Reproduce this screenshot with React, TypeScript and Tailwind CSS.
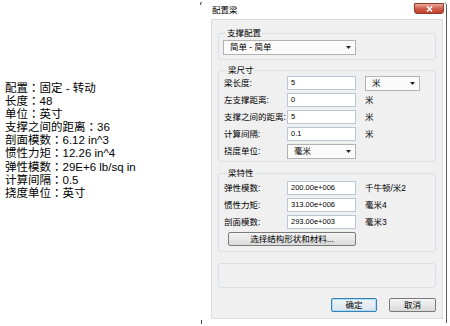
import React from "react";

const Colon = () => <span className="font-['Noto_Sans_CJK_TC',sans-serif]">：</span>;

const lines: [string, string][] = [
  ["配置", "固定 - 转动"],
  ["长度", "48"],
  ["单位", "英寸"],
  ["支撑之间的距离", "36"],
  ["剖面模数", "6.12 in^3"],
  ["惯性力矩", "12.26 in^4"],
  ["弹性模数", "29E+6 lb/sq in"],
  ["计算间隔", "0.5"],
  ["挠度单位", "英寸"],
];

const Arrow = () => (
  <svg width="5" height="3" viewBox="0 0 5 3" className="shrink-0">
    <path d="M0 0H5L2.5 3Z" fill="#222" />
  </svg>
);

const Select = ({ value, w }: { value: string; w: string }) => (
  <div className={`${w} h-[15px] flex items-center justify-between pl-[6px] pr-[4px] bg-[#fbfbfb] border border-[#b3b3b3] text-[8.5px]`}>
    <span>{value}</span>
    <Arrow />
  </div>
);

const Input = ({ value }: { value: string }) => (
  <div className="w-[69px] h-[14px] flex items-center px-[3px] bg-white border border-[#b7c7d6] text-[7.5px]">
    {value}
  </div>
);

const Row = ({ label, children }: { label: string; children: React.ReactNode }) => (
  <div className="h-[14px] flex items-center">
    <div className="w-[63px] text-[8.5px] whitespace-nowrap">{label}</div>
    {children}
  </div>
);

const Unit = ({ t }: { t: string }) => <div className="ml-[9px] text-[8.5px] whitespace-nowrap">{t}</div>;

const Legend = ({ t }: { t: string }) => (
  <legend className="ml-[3px] px-[1px] text-[8.5px] leading-[12px]">{t}</legend>
);

function Dialog() {
  return (
    <div className="relative w-[248px] h-[326px] shrink-0">
      <div className="absolute left-0 top-[2px] w-[2px] h-[3px] border-l border-t border-[#555] rounded-tl-[2px]" />
      <div className="absolute left-[1px] top-[320px] w-[1px] h-[4px] bg-[#444]" />
      <div className="mt-[2px] mr-[1px] h-[321px] border-r border-[#5c5c5c] rounded-tr-[4px]">
        <div className="h-[17px] flex items-center pl-[12px] text-[8.5px]">配置梁</div>
        <div className="absolute top-[3px] right-[4px] w-[30px] h-[11px] rounded-b-[3px] border border-[#8d3a2c] bg-linear-to-b from-[#e9a99c] via-[#d0604b] to-[#c2402c] flex items-center justify-center">
          <svg width="7" height="6" viewBox="0 0 7 6">
            <path d="M1 0.5L6 5.5M6 0.5L1 5.5" stroke="#fff" strokeWidth="1.6" />
          </svg>
        </div>
        <div className="ml-[11px] w-[232px] h-[300px] bg-[#f0f0f0] border border-[#dcdcdc] px-[6px] pt-[7px] text-black">
          <fieldset className="border border-[#d5dfe5] rounded-[3px] pl-[4px] pt-[1px] pb-[4px]">
            <Legend t="支撑配置" />
            <Select value="简单 - 简单" w="w-[133px]" />
          </fieldset>
          <fieldset className="mt-[4px] border border-[#d5dfe5] rounded-[3px] pl-[5px] pb-[3px] flex flex-col gap-[3px]">
            <Legend t="梁尺寸" />
            <Row label="梁长度:">
              <Input value="5" />
              <div className="ml-[9px]">
                <Select value="米" w="w-[55px]" />
              </div>
            </Row>
            <Row label="左支撑距离:">
              <Input value="0" />
              <Unit t="米" />
            </Row>
            <Row label="支撑之间的距离:">
              <Input value="5" />
              <Unit t="米" />
            </Row>
            <Row label="计算间隔:">
              <Input value="0.1" />
              <Unit t="米" />
            </Row>
            <Row label="挠度单位:">
              <Select value="毫米" w="w-[69px]" />
            </Row>
          </fieldset>
          <fieldset className="mt-[5px] border border-[#d5dfe5] rounded-[3px] pl-[5px] pt-[2px] pb-[5px] flex flex-col gap-[3px]">
            <Legend t="梁特性" />
            <Row label="弹性模数:">
              <Input value="200.00e+006" />
              <Unit t="千牛顿/米2" />
            </Row>
            <Row label="惯性力矩:">
              <Input value="313.00e+006" />
              <Unit t="毫米4" />
            </Row>
            <Row label="剖面模数:">
              <Input value="293.00e+003" />
              <Unit t="毫米3" />
            </Row>
            <div className="ml-[4px] w-[128px] h-[14px] rounded-[2px] border border-[#7a7a7a] bg-linear-to-b from-[#f4f4f4] to-[#dadada] flex items-center justify-center text-[8.5px]">
              选择结构形状和材料...
            </div>
          </fieldset>
          <div className="mt-[11px] h-[25px] border border-[#d5dfe5] rounded-[3px]" />
          <div className="mt-[10px] flex justify-end gap-[12px]">
            <div className="w-[46px] h-[14px] rounded-[2px] border border-[#3c7fb1] shadow-[inset_0_0_0_1px_#a6dcf8] bg-linear-to-b from-[#f0f6fa] to-[#d8e4ec] flex items-center justify-center text-[8.5px]">
              确定
            </div>
            <div className="w-[47px] h-[14px] rounded-[2px] border border-[#7a7a7a] bg-linear-to-b from-[#f4f4f4] to-[#dadada] flex items-center justify-center text-[8.5px]">
              取消
            </div>
          </div>
        </div>
      </div>
    </div>
  );
}

export default function App() {
  return (
    <div className="w-[450px] h-[326px] bg-white flex overflow-hidden font-['Liberation_Sans','Noto_Sans_CJK_SC',sans-serif] text-black">
      <div className="w-[200px] shrink-0 pl-[5px] pt-[81px] text-[11.5px] leading-[12.1px]">
        {lines.map(([k, v]) => (
          <div key={k} className="whitespace-nowrap">
            {k}
            <Colon />
            {v}
          </div>
        ))}
      </div>
      <Dialog />
    </div>
  );
}
